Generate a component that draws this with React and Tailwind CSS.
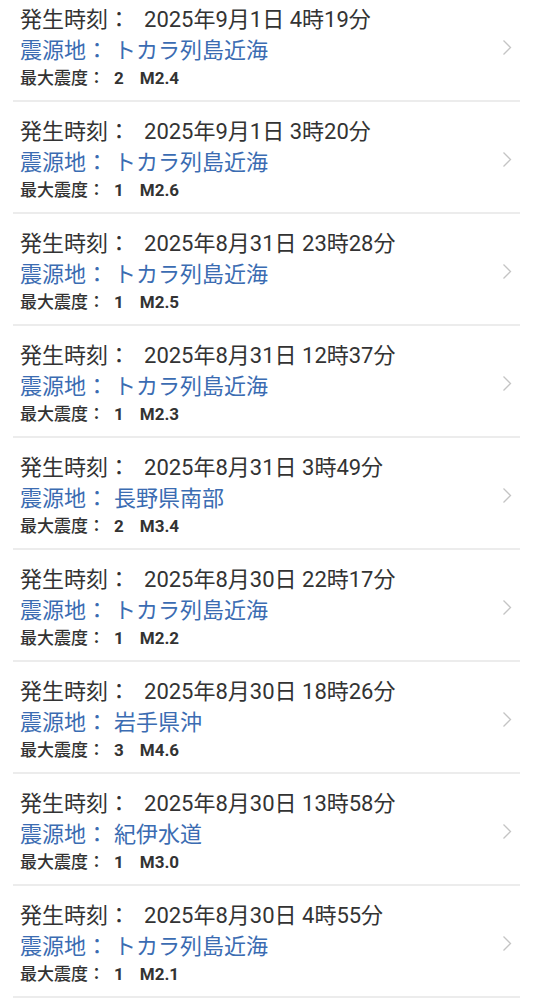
import React from "react";

const rows = [
  ["2025年9月1日 4時19分", "トカラ列島近海", "2", "M2.4"],
  ["2025年9月1日 3時20分", "トカラ列島近海", "1", "M2.6"],
  ["2025年8月31日 23時28分", "トカラ列島近海", "1", "M2.5"],
  ["2025年8月31日 12時37分", "トカラ列島近海", "1", "M2.3"],
  ["2025年8月31日 3時49分", "長野県南部", "2", "M3.4"],
  ["2025年8月30日 22時17分", "トカラ列島近海", "1", "M2.2"],
  ["2025年8月30日 18時26分", "岩手県沖", "3", "M4.6"],
  ["2025年8月30日 13時58分", "紀伊水道", "1", "M3.0"],
  ["2025年8月30日 4時55分", "トカラ列島近海", "1", "M2.1"],
];

function Chevron() {
  return (
    <svg width="10" height="17" viewBox="0 0 10 17" fill="none" className="shrink-0">
      <path d="M1.5 1.5 L8.5 8.5 L1.5 15.5" stroke="#c4c4c4" strokeWidth="1.3" />
    </svg>
  );
}

export default function App() {
  return (
    <div
      className="w-[533px] h-[1000px] overflow-hidden bg-white"
      style={{ fontFamily: 'Roboto, "Noto Sans CJK JP", sans-serif' }}
    >
      <div className="-mt-[10px] mx-[13px]">
        {rows.map(([time, place, shindo, mag], i) => (
          <div
            key={i}
            className="flex items-center border-b-2 border-[#ececec] pt-[15px] pb-[10px] pl-[7px] pr-[8px]"
          >
            <div className="flex-1 flex flex-col">
              <div className="text-[22px] leading-[30px] text-[#333333] whitespace-nowrap">
                発生時刻：<span className="ml-[14px]">{time}</span>
              </div>
              <div className="text-[22px] leading-[31px] text-[#3b6cb2] whitespace-nowrap">
                震源地：<span className="ml-[6px]">{place}</span>
              </div>
              <div className="text-[17px] leading-[24px] text-[#333333] whitespace-nowrap font-medium">
                最大震度：
                <span className="ml-[9px] font-bold">{shindo}</span>
                <span className="ml-[16px] font-bold">{mag}</span>
              </div>
            </div>
            <Chevron />
          </div>
        ))}
      </div>
    </div>
  );
}
